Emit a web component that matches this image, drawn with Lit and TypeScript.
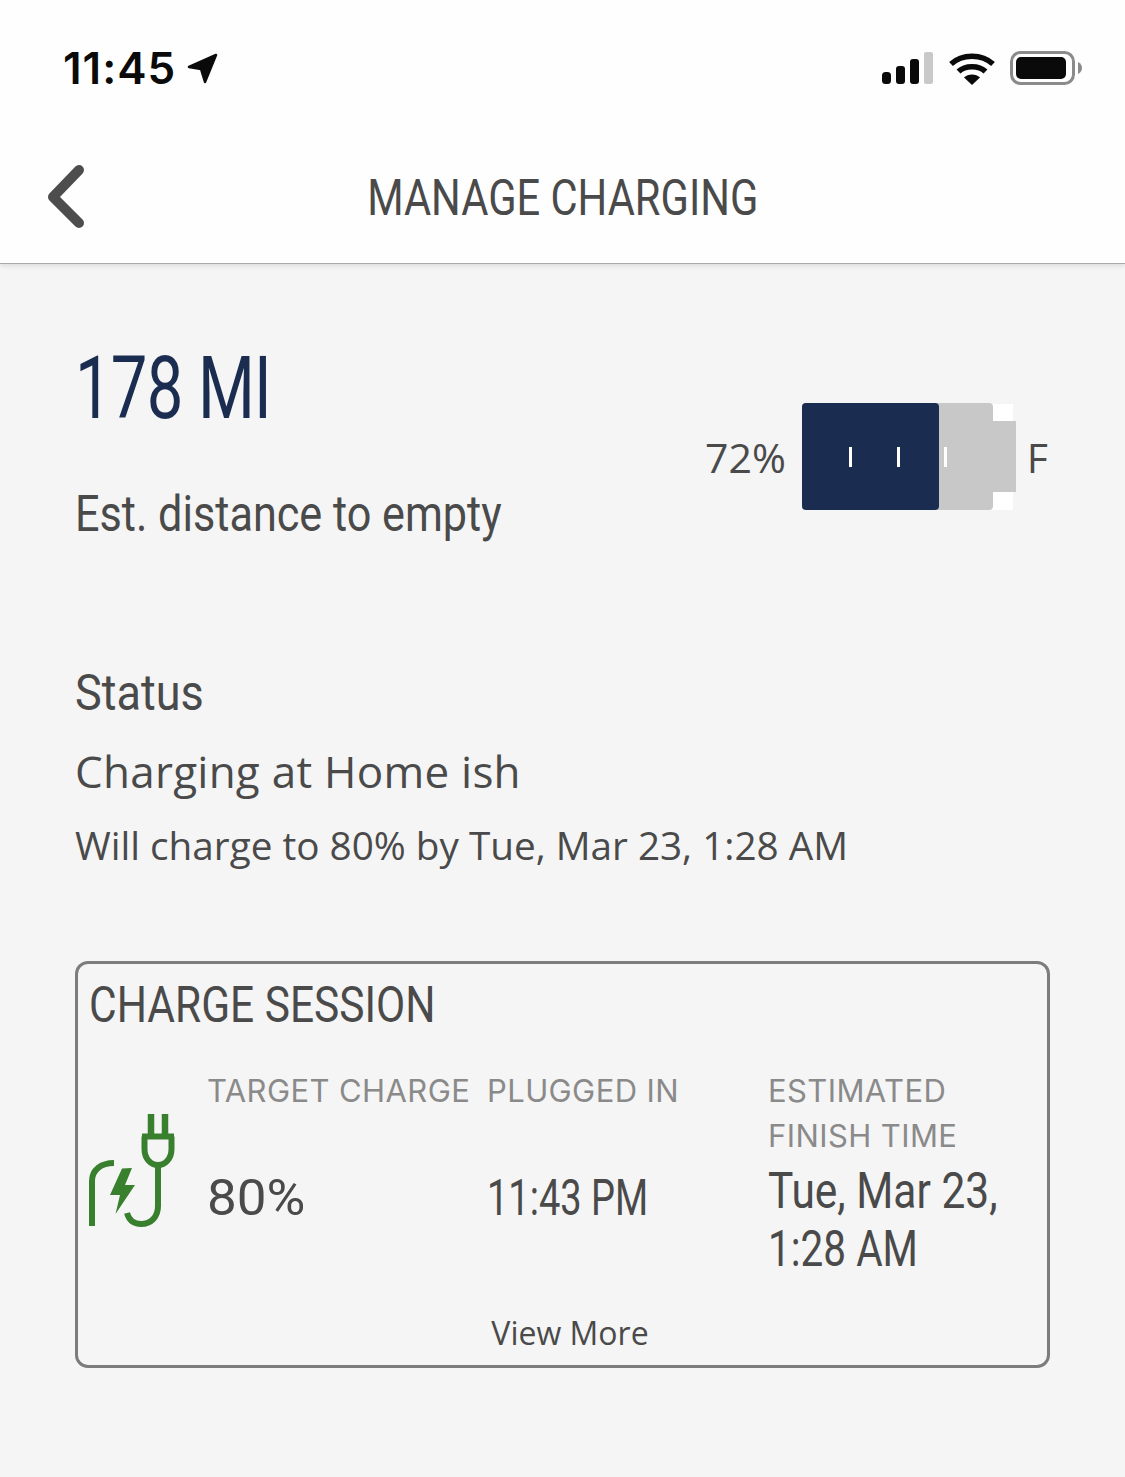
import { LitElement, html, css } from "lit";
import { customElement } from "lit/decorators.js";

@customElement("app-root")
export class AppRoot extends LitElement {
  static styles = css`
    :host { display: block; width: 1125px; height: 1477px; overflow: hidden; background: #f5f5f5; color: #4a4a4a; font-family: "Open Sans", sans-serif; }
    .head { background: #fefefe; height: 264px; box-sizing: border-box; border-bottom: 1px solid #a8a8a8; box-shadow: 0 2px 5px rgba(0,0,0,.1); }
    .status { height: 130px; box-sizing: border-box; padding: 6px 43px 0 63px; display: flex; align-items: center; justify-content: space-between; }
    .clock { display: flex; align-items: center; gap: 11px; font: 600 44px/1 Inter, sans-serif; color: #0a0a0a; letter-spacing: 1px; }
    .sys { display: flex; align-items: center; gap: 15.5px; }
    svg { display: block; }
    .nav { height: 133px; display: grid; grid-template-columns: 47px 1fr 47px; align-items: center; }
    .back { margin-left: 47px; }
    .title { text-align: center; font-size: 50px; margin-top: -2px; }
    .cond { display: inline-block; font-family: "Roboto", sans-serif; font-weight: 400; transform: scaleX(var(--sx, .76)); transform-origin: 0 50%; white-space: nowrap; }
    .title .cond { transform-origin: 50% 50%; --sx: .833; }
    main { padding: 70px 75px 0; }
    .hero { display: flex; justify-content: space-between; align-items: flex-start; }
    .range { font-size: 88px; line-height: 100px; color: #1a2d50; height: 100px; --sx: .74; letter-spacing: -1px; }
    .sub { font-size: 50px; line-height: 60px; margin-top: 48px; --sx: .864; }
    .gauge { display: flex; align-items: center; margin: 69px 2px 0 0; gap: 16px; font-size: 41px; line-height: 1; font-weight: 400; }
    .gauge .f { margin-left: -5px; }
    .st-h { font-size: 50px; line-height: 60px; margin-top: 117px; --sx: .9; }
    .st-a { font-size: 44px; line-height: 60px; margin-top: 18px; letter-spacing: .25px; }
    .st-b { font-size: 38.7px; line-height: 54px; margin-top: 17px; }
    .card { margin-top: 89px; height: 407px; box-sizing: border-box; border: 3px solid #7c7c7c; border-radius: 13px; padding: 9px 11px 0; display: flex; flex-direction: column; }
    .card-t { font-size: 50px; line-height: 60px; height: 60px; --sx: .849; }
    .cols { display: grid; grid-template-columns: 118px 280px 281px 1fr; margin-top: 35px; height: 245px; }
    .plug { padding-top: 3px; margin-top: 42px; }
    .lab { font: 400 31px/45px Inter, sans-serif; color: #8a8a8a; white-space: nowrap; letter-spacing: .4px; }
    .val { font-size: 50px; line-height: 57px; margin-top: 55px; }
    .pct { --sx: 1.06; }
    .col3 .val { margin-top: 3px; line-height: 56px; }
    .tue { --sx: .85; }
    .tm { --sx: .81; }
    .more { text-align: center; font-size: 32px; line-height: 40px; padding-left: 15px; }
  `;

  render() {
    return html`
      <div class="head">
        <div class="status">
          <div class="clock"><span>11:45</span>
            <svg width="32" height="32" viewBox="0 0 32 32"><path d="M2 15 29 3 18 30 14 17Z" fill="#0a0a0a" stroke="#0a0a0a" stroke-width="2.500" stroke-linejoin="round"/></svg>
          </div>
          <div class="sys">
            <svg width="51" height="32" viewBox="0 0 51 32" fill="#0a0a0a">
              <rect x="0" y="20" width="9" height="12" rx="3.500"/><rect x="14" y="14" width="9" height="18" rx="3"/><rect x="28" y="7" width="9" height="25" rx="3"/><rect x="42" y="0" width="9" height="32" rx="2" fill="#c9c9c9"/>
            </svg>
            <svg width="46" height="34" viewBox="0 0 46 34" fill="none" stroke="#0a0a0a" stroke-width="5.500">
              <path d="M2 13C13 2.500 33 2.500 44 13"/><path d="M9.500 20.500C16 14 30 14 36.500 20.500"/><path d="M23 34 15 26.500C19 22.500 27 22.500 31 26.500Z" fill="#0a0a0a" stroke="none"/>
            </svg>
            <svg width="72" height="34" viewBox="0 0 72 34">
              <rect x="1.500" y="1.500" width="62" height="31" rx="9" fill="none" stroke="#8b8b8b" stroke-width="3"/>
              <rect x="6" y="6" width="50" height="22" rx="5" fill="#0a0a0a"/>
              <path d="M68 11C71 12.500 72 15 72 17S71 21.500 68 23Z" fill="#8b8b8b"/>
            </svg>
          </div>
        </div>
        <div class="nav">
          <svg class="back" width="38" height="64" viewBox="0 0 38 64"><path d="M32 5 6 32 32 58" fill="none" stroke="#4d4d4d" stroke-width="10" stroke-linecap="round" stroke-linejoin="round"/></svg>
          <div class="title"><span class="cond">MANAGE CHARGING</span></div>
          <span></span>
        </div>
      </div>
      <main>
        <div class="hero">
          <div>
            <div class="range"><span class="cond">178 MI</span></div>
            <div class="sub"><span class="cond">Est. distance to empty</span></div>
          </div>
          <div class="gauge">
            <span>72%</span>
            <svg width="214" height="108" viewBox="0 0 214 108">
              <rect x="190" y="1" width="21" height="106" fill="#fff"/>
              <rect x="0" y="0" width="191" height="107" rx="4" fill="#c8c8c8"/>
              <rect x="190" y="18" width="24" height="71" fill="#c8c8c8"/>
              <rect x="0" y="0" width="137" height="107" rx="4" fill="#1a2d50"/>
              <rect x="47" y="44" width="3" height="20" fill="#fff"/><rect x="95" y="44" width="3" height="20" fill="#fff"/><rect x="142" y="44" width="3" height="20" fill="#fff"/>
            </svg>
            <span class="f">F</span>
          </div>
        </div>
        <div class="st-h"><span class="cond">Status</span></div>
        <div class="st-a">Charging at Home ish</div>
        <div class="st-b">Will charge to 80% by Tue, Mar 23, 1:28 AM</div>
        <section class="card">
          <div class="card-t"><span class="cond">CHARGE SESSION</span></div>
          <div class="cols">
            <div class="plug">
              <svg width="88" height="116" viewBox="20 22 88 116" fill="none" stroke="#38802e" stroke-width="6">
                <path d="M82 23V44M96 23V44" stroke-width="6.500"/>
                <path d="M73 45.500H105M75.500 45.500V58C75.500 68 82 74 89 74S102.500 68 102.500 58V45.500"/>
                <path d="M89 74V115C89 126 82 133 72 133 65 133 60 129 58 122"/>
                <path d="M23 135V90C23 79 32 72 45 72"/>
                <path d="M53 77.500 63 77 56 94 66 94 46.500 123 51 104 41 104Z" fill="#38802e" stroke="none"/>
              </svg>
            </div>
            <div><div class="lab">TARGET CHARGE</div><div class="val"><span class="cond pct">80%</span></div></div>
            <div><div class="lab">PLUGGED IN</div><div class="val"><span class="cond">11:43 PM</span></div></div>
            <div class="col3"><div class="lab">ESTIMATED<br>FINISH TIME</div><div class="val"><span class="cond tue">Tue, Mar 23,</span><br><span class="cond tm">1:28 AM</span></div></div>
          </div>
          <div class="more">View More</div>
        </section>
      </main>
    `;
  }
}
